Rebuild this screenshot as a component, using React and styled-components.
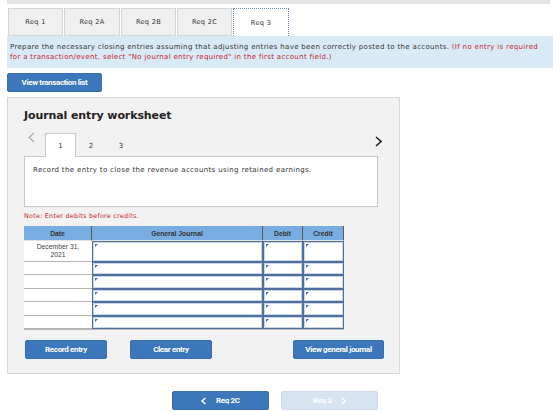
import React from 'react';
import styled, { createGlobalStyle } from 'styled-components';

const GlobalStyle = createGlobalStyle`
  body {
    margin: 0;
    background: #fff;
    font-family: "DejaVu Sans", Verdana, sans-serif;
  }
`;

const Page = styled.div`
  width: 560px;
  height: 411px;
  overflow: hidden;
  padding: 0 0 0 7px;
  box-sizing: border-box;
`;

const TopBar = styled.div`
  width: 543px;
  height: 4px;
  background: #e4e4e4;
`;

const TabRow = styled.div`
  display: flex;
  gap: 1px;
  margin: 4px 0 0 1px;
  height: 28px;
`;

const Tab = styled.div`
  width: ${p => p.$w}px;
  box-sizing: border-box;
  display: flex;
  align-items: center;
  justify-content: center;
  font-size: 6.6px;
  letter-spacing: 0.3px;
  color: #333;
  background: ${p => (p.$active ? '#fff' : '#f0f0f0')};
  border: ${p => (p.$active ? '1px dotted #6d87b3' : '1px solid #d4d4d4')};
  border-bottom: ${p => (p.$active ? 'none' : '1px solid #d4d4d4')};
`;

const InfoBand = styled.div`
  width: 546px;
  box-sizing: border-box;
  background: #d9eaf7;
  padding: 6px 3px 6px 3px;
  font-size: 7px;
  letter-spacing: 0.33px;
  line-height: 10px;
  color: #333;
  white-space: nowrap;
`;

const Red = styled.span`
  color: #c8212c;
`;

const Button = styled.div`
  width: ${p => p.$w}px;
  height: 19px;
  box-sizing: border-box;
  display: flex;
  align-items: center;
  justify-content: center;
  gap: 9px;
  background: ${p => (p.$disabled ? '#d6e3f1' : '#3b77ba')};
  color: #fff;
  border-radius: 2px;
  border: 1px solid ${p => (p.$disabled ? '#d0dcea' : '#3670b0')};
  font-family: Roboto, "Liberation Sans", sans-serif;
  font-weight: 700;
  font-size: 8px;
  letter-spacing: -0.35px;
`;

const TransButton = styled(Button)`
  margin-top: 5px;
`;

const Panel = styled.div`
  width: 393px;
  height: 277px;
  box-sizing: border-box;
  margin-top: 5px;
  background: #f2f2f2;
  border: 1px solid #d9d9d9;
  padding: 11px 21px 0 16px;
`;

const Title = styled.div`
  font-weight: 700;
  font-size: 11px;
  color: #222;
  height: 13px;
  line-height: 13px;
  letter-spacing: -0.1px;
`;

const StepNav = styled.div`
  display: flex;
  align-items: flex-end;
  height: 24px;
  margin-top: 10px;
`;

const ChevronBox = styled.div`
  width: ${p => (p.$right ? 'auto' : '21px')};
  margin-left: ${p => (p.$right ? 'auto' : '0')};
  margin-right: ${p => (p.$right ? '-4px' : '0')};
  padding-left: ${p => (p.$right ? '0' : '4px')};
  box-sizing: border-box;
  align-self: ${p => (p.$right ? 'flex-end' : 'flex-start')};
  margin-bottom: ${p => (p.$right ? '9px' : '0')};
  display: flex;
`;

const Step = styled.div`
  width: ${p => (p.$active ? 31 : 30)}px;
  height: 24px;
  box-sizing: border-box;
  display: flex;
  align-items: center;
  justify-content: center;
  font-size: 7px;
  color: #333;
  background: ${p => (p.$active ? '#fff' : 'transparent')};
  border: ${p => (p.$active ? '1px solid #c8c8c8' : '1px solid transparent')};
  border-bottom: none;
  margin-bottom: -1px;
  position: relative;
  z-index: 1;
`;

const Prompt = styled.div`
  height: 51px;
  box-sizing: border-box;
  background: #fff;
  border: 1px solid #c8c8c8;
  padding: 9px 8px;
  font-size: 7px;
  letter-spacing: 0.35px;
  color: #333;
`;

const Note = styled.div`
  margin-top: 5px;
  font-size: 6.4px;
  letter-spacing: 0.25px;
  color: #c8212c;
  height: 8px;
`;

const Table = styled.div`
  margin-top: 6px;
  width: 320px;
  display: grid;
  grid-template-columns: 68px 171px 40px 41px;
  grid-template-rows: 15px 21px repeat(5, 13.4px);
  font-family: "Liberation Sans", Arial, sans-serif;
  border-bottom: 1px solid #b8b8b8;
`;

const Head = styled.div`
  background: #79ade2;
  color: #333;
  font-size: 6.8px;
  font-weight: 700;
  display: flex;
  align-items: center;
  justify-content: center;
  border-right: 1px solid #5a5a5a;
  border-bottom: 1px solid #e3e3e3;
`;

const DateCell = styled.div`
  background: #fff;
  border-bottom: 1px solid #b3b3b3;
  font-size: 6.8px;
  color: #444;
  text-align: center;
  line-height: 8px;
  padding-top: 2px;
  box-sizing: border-box;
`;

const InputCell = styled.div`
  background: #fff;
  border: 1px solid #4f6f9c;
  box-shadow: inset 0 0 0 1px #c9d6e7;
  position: relative;
  &::before {
    content: '';
    position: absolute;
    top: 2px;
    left: 2px;
    border-top: 3px solid #3b6fc0;
    border-right: 3px solid transparent;
  }
`;

const ActionRow = styled.div`
  display: flex;
  margin: 10px -6px 0 0;
  padding-left: 1px;
  gap: 23px;
`;

const Spacer = styled.div`
  flex: 1;
`;

const BottomNav = styled.div`
  display: flex;
  gap: 12px;
  margin: 17px 0 0 165px;
`;

const Chevron = ({ dir = 'left', color, w = 5, h = 9, sw = 1.3 }) => (
  <svg width={w + 2} height={h + 2} viewBox={`-1 -1 ${w + 2} ${h + 2}`}>
    <path
      d={dir === 'left' ? `M${w} 0 L0 ${h / 2} L${w} ${h}` : `M0 0 L${w} ${h / 2} L0 ${h}`}
      fill="none"
      stroke={color}
      strokeWidth={sw}
    />
  </svg>
);

const rows = ['December 31,\n2021', '', '', '', '', ''];

export default function App() {
  const tabs = [
    ['Req 1', 55],
    ['Req 2A', 56],
    ['Req 2B', 55],
    ['Req 2C', 55],
    ['Req 3', 56],
  ];

  return (
    <Page>
      <GlobalStyle />
      <TopBar />
      <TabRow>
        {tabs.map(([t, w]) => (
          <Tab key={t} $w={w} $active={t === 'Req 3'}>{t}</Tab>
        ))}
      </TabRow>
      <InfoBand>
        Prepare the necessary closing entries assuming that adjusting entries have been correctly posted to the accounts.{' '}
        <Red>(If no entry is required</Red>
        <br />
        <Red>for a transaction/event, select "No journal entry required" in the first account field.)</Red>
      </InfoBand>
      <TransButton $w={95}>View transaction list</TransButton>

      <Panel>
        <Title>Journal entry worksheet</Title>
        <StepNav>
          <ChevronBox>
            <Chevron dir="left" color="#a8a8a8" w={5} h={9} sw={1.1} />
          </ChevronBox>
          <Step $active>1</Step>
          <Step>2</Step>
          <Step>3</Step>
          <ChevronBox $right>
            <Chevron dir="right" color="#222" w={5} h={9} sw={1.6} />
          </ChevronBox>
        </StepNav>
        <Prompt>Record the entry to close the revenue accounts using retained earnings.</Prompt>
        <Note>Note: Enter debits before credits.</Note>

        <Table>
          <Head>Date</Head>
          <Head>General Journal</Head>
          <Head>Debit</Head>
          <Head>Credit</Head>
          {rows.map((d, i) => (
            <React.Fragment key={i}>
              <DateCell>
                {d.split('\n').map((l, j) => <div key={j}>{l}</div>)}
              </DateCell>
              <InputCell />
              <InputCell />
              <InputCell />
            </React.Fragment>
          ))}
        </Table>

        <ActionRow>
          <Button $w={82}>Record entry</Button>
          <Button $w={82}>Clear entry</Button>
          <Spacer />
          <Button $w={91}>View general journal</Button>
        </ActionRow>
      </Panel>

      <BottomNav>
        <Button $w={97}>
          <Chevron dir="left" color="#fff" w={3.5} h={6} sw={1.5} />
          <span>Req 2C</span>
        </Button>
        <Button $w={97} $disabled>
          <span>Req 3</span>
          <Chevron dir="right" color="#fff" w={3.5} h={6} sw={1.5} />
        </Button>
      </BottomNav>
    </Page>
  );
}
